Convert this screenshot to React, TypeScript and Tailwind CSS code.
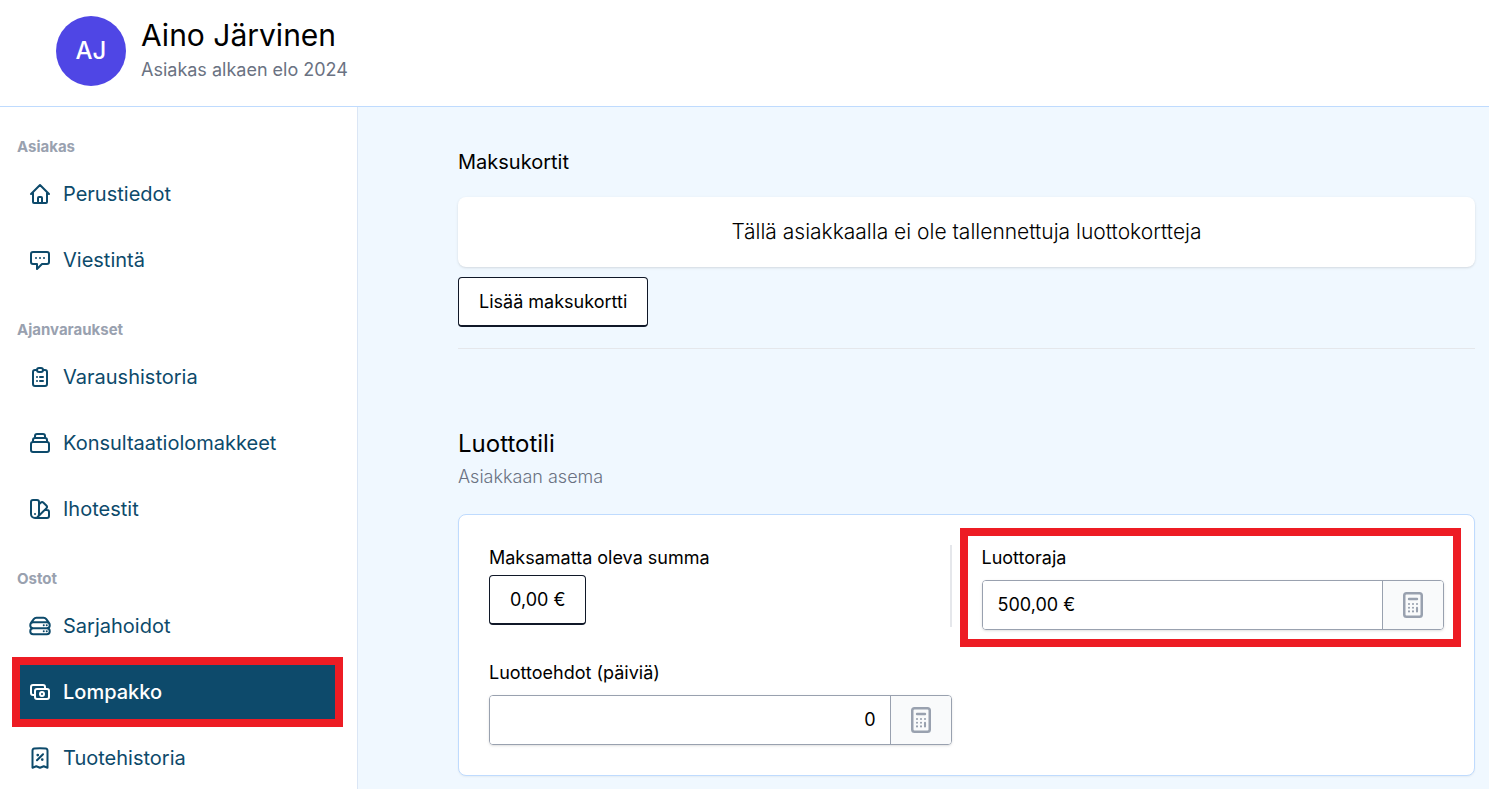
import type { ReactNode } from 'react';
import type { IconType } from 'react-icons';
import {
    HiOutlineCash,
    HiOutlineChatAlt,
    HiOutlineClipboardList,
    HiOutlineCollection,
    HiOutlineColorSwatch,
    HiOutlineHome,
} from 'react-icons/hi';
import { HiOutlineReceiptPercent, HiOutlineServerStack } from 'react-icons/hi2';
import clsx from 'clsx';

type NavItem = { label: string; icon: IconType; active?: boolean };

const sections: { title: string; items: NavItem[] }[] = [
    {
        title: 'Asiakas',
        items: [
            { label: 'Perustiedot', icon: HiOutlineHome },
            { label: 'Viestintä', icon: HiOutlineChatAlt },
        ],
    },
    {
        title: 'Ajanvaraukset',
        items: [
            { label: 'Varaushistoria', icon: HiOutlineClipboardList },
            { label: 'Konsultaatiolomakkeet', icon: HiOutlineCollection },
            { label: 'Ihotestit', icon: HiOutlineColorSwatch },
        ],
    },
    {
        title: 'Ostot',
        items: [
            { label: 'Sarjahoidot', icon: HiOutlineServerStack },
            { label: 'Lompakko', icon: HiOutlineCash, active: true },
            { label: 'Tuotehistoria', icon: HiOutlineReceiptPercent },
        ],
    },
];

function Header() {
    return (
        <header className="flex items-center gap-[15px] border-b border-[#bfdbfe] bg-white pt-4 pb-5 pl-14">
            <div className="flex size-[70px] shrink-0 items-center justify-center rounded-full bg-[#4f46e5] text-2xl font-medium text-white">
                AJ
            </div>
            <div className="flex flex-col gap-1 pb-[2px]">
                <h1 className="text-3xl leading-9">Aino Järvinen</h1>
                <p className="text-lg leading-[26px] text-gray-500">Asiakas alkaen elo 2024</p>
            </div>
        </header>
    );
}

function Sidebar() {
    return (
        <aside className="w-[358px] shrink-0 border-r border-[#dbe6f5] bg-white pt-7 pr-[19px] pb-1 pl-[17px]">
            <nav className="flex flex-col gap-[31px]">
                {sections.map((section) => (
                    <div key={section.title} className="flex flex-col gap-2">
                        <h2 className="text-[15px] leading-6 font-bold text-gray-400">{section.title}</h2>
                        <ul className="flex flex-col gap-3 px-[3px]">
                            {section.items.map(({ label, icon: Icon, active }) => (
                                <li key={label}>
                                    <a
                                        href="#"
                                        aria-current={active ? 'page' : undefined}
                                        className={clsx(
                                            'flex h-[54px] items-center gap-[11px] pl-2 text-xl',
                                            active
                                                ? 'bg-[#0d4a6b] font-medium text-white ring-8 ring-[#ed1c24]'
                                                : 'text-[#0d4a6b]'
                                        )}
                                    >
                                        <Icon className="size-6" strokeWidth={2} />
                                        {label}
                                    </a>
                                </li>
                            ))}
                        </ul>
                    </div>
                ))}
            </nav>
        </aside>
    );
}

function CalculatorIcon() {
    return (
        <svg viewBox="0 0 20 26" className="h-[26px] w-5" fill="none" stroke="currentColor" strokeLinecap="round">
            <rect x="1.25" y="1.25" width="17.5" height="23.5" rx="2.25" strokeWidth="2.5" />
            <path d="M6 7h8" strokeWidth="2.4" />
            <path
                d="M6 12h.01M10 12h.01M14 12h.01M6 15.7h.01M10 15.7h.01M6 19.4h.01M10 19.4h.01M14 15.9v3.5"
                strokeWidth="2.1"
            />
        </svg>
    );
}

function OutlineButton({ children }: { children: ReactNode }) {
    return (
        <button
            type="button"
            className="h-[50px] rounded border border-b-2 border-gray-900 bg-white px-5 text-lg"
        >
            {children}
        </button>
    );
}

type NumberFieldProps = { id: string; label: string; value: string; alignRight?: boolean };

function NumberField({ id, label, value, alignRight }: NumberFieldProps) {
    return (
        <div className="flex flex-col gap-[10px]">
            <label htmlFor={id} className="text-lg leading-[25px]">
                {label}
            </label>
            <div className="flex h-[50px] overflow-hidden rounded border border-gray-400 shadow-sm">
                <input
                    id={id}
                    type="text"
                    defaultValue={value}
                    className={clsx(
                        'min-w-0 flex-1 bg-white pr-[14px] pl-[15px] text-lg outline-none',
                        alignRight && 'text-right'
                    )}
                />
                <button
                    type="button"
                    aria-label={`${label}: laskin`}
                    className="flex w-[61px] items-center justify-center border-l border-gray-400 bg-gray-50 text-gray-400"
                >
                    <CalculatorIcon />
                </button>
            </div>
        </div>
    );
}

export default function App() {
    return (
        <div className="flex min-h-screen flex-col bg-[#f0f8ff] font-[Inter,sans-serif] text-black">
            <Header />
            <div className="flex flex-1">
                <Sidebar />
                <main className="min-w-0 flex-1 pt-10 pr-[14px] pb-3 pl-[100px]">
                    <section className="border-b border-gray-200 pb-[21px]">
                        <h2 className="text-xl leading-[30px]">Maksukortit</h2>
                        <div className="mt-5 mb-[10px] flex h-[70px] items-center justify-center rounded-lg bg-white text-[21px] font-light shadow-sm">
                            Tällä asiakkaalla ei ole tallennettuja luottokortteja
                        </div>
                        <OutlineButton>Lisää maksukortti</OutlineButton>
                    </section>

                    <section className="pt-20">
                        <h2 className="text-2xl leading-[30px]">Luottotili</h2>
                        <p className="mt-1 text-lg leading-7 font-light text-gray-500">Asiakkaan asema</p>
                        <div className="mt-[23px] grid grid-cols-2 gap-[30px] rounded-lg border border-[#bfdbfe] bg-white p-[30px] shadow-xs">
                            <div className="flex flex-col items-start gap-[5px] self-start border-r-2 border-gray-200 pb-[2px]">
                                <span className="text-lg leading-[25px]">Maksamatta oleva summa</span>
                                <OutlineButton>0,00 €</OutlineButton>
                            </div>
                            <div className="relative">
                                <NumberField id="luottoraja" label="Luottoraja" value="500,00 €" />
                                {/* highlight frame */}
                                <div className="pointer-events-none absolute -top-[17px] -right-[17px] -bottom-[17px] -left-[22px] border-8 border-[#ed1c24]" />
                            </div>
                            <NumberField id="luottoehdot" label="Luottoehdot (päiviä)" value="0" alignRight />
                        </div>
                    </section>
                </main>
            </div>
        </div>
    );
}
